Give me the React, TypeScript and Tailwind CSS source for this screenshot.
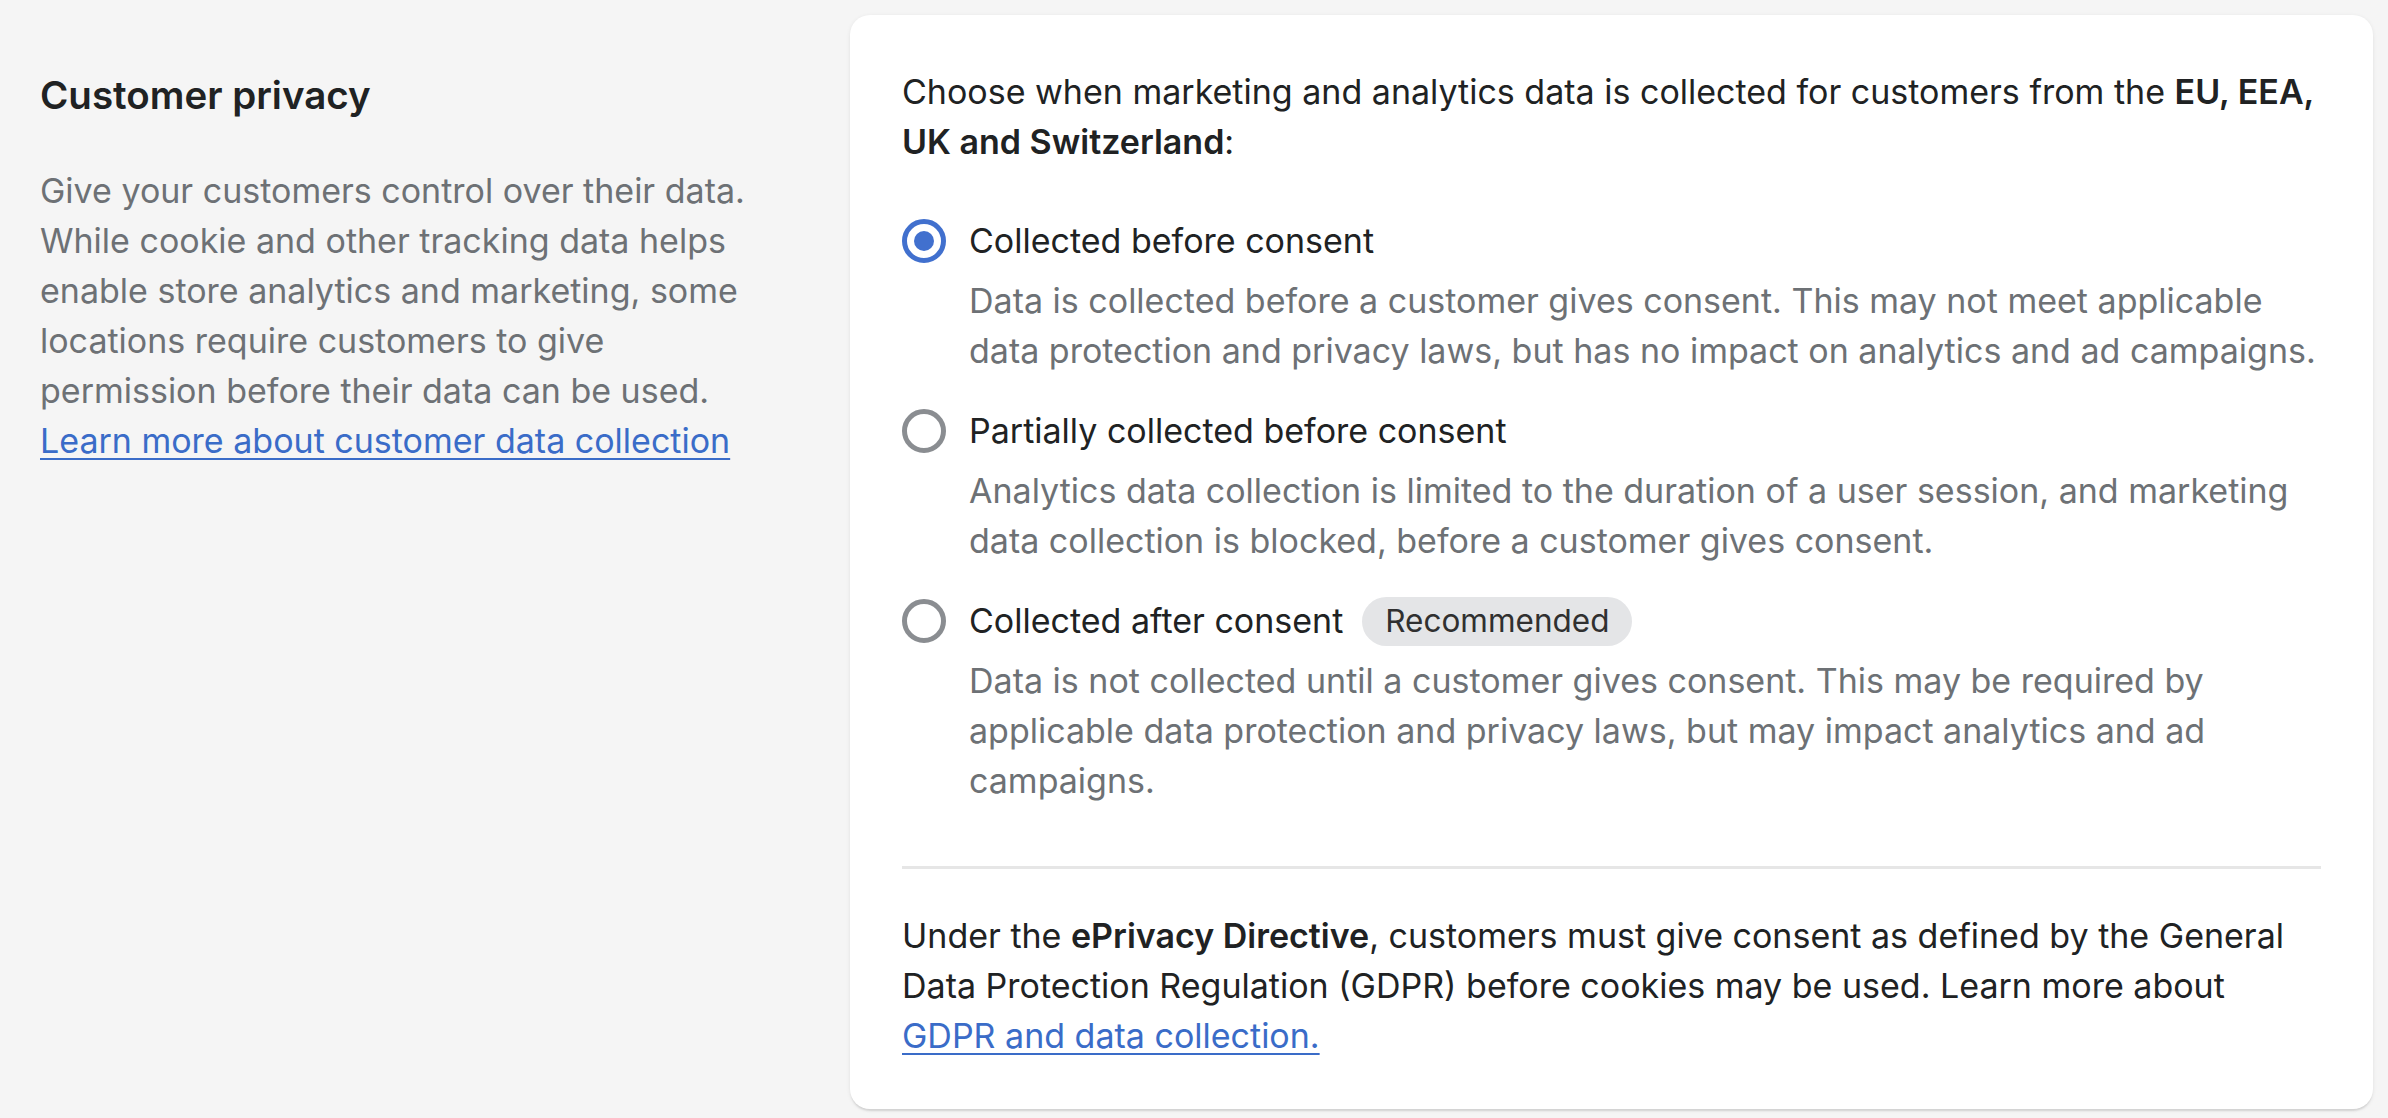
import React from "react";

function Radio({ checked }: { checked: boolean }) {
  return checked ? (
    <span className="flex h-[44px] w-[44px] shrink-0 items-center justify-center rounded-full border-[5px] border-[#4170ce] bg-white">
      <span className="h-[20px] w-[20px] rounded-full bg-[#4170ce]" />
    </span>
  ) : (
    <span className="h-[44px] w-[44px] shrink-0 rounded-full border-[5px] border-[#8a8d91] bg-white" />
  );
}

function Choice({
  checked,
  title,
  badge,
  lines,
}: {
  checked: boolean;
  title: string;
  badge?: string;
  lines: string[];
}) {
  return (
    <div className="flex gap-[23px]">
      <div className="flex h-[50px] items-center">
        <Radio checked={checked} />
      </div>
      <div className="flex-1">
        <div className="flex h-[50px] items-center gap-[19px] text-[#202223]">
          <span>{title}</span>
          {badge && (
            <span className="flex h-[49px] items-center rounded-full bg-[#e4e5e7] px-[23px] text-[31.5px] text-[#303030]">
              {badge}
            </span>
          )}
        </div>
        <p className="mt-[10px] whitespace-nowrap text-[#6d7175]">
          {lines.map((l, i) => (
            <React.Fragment key={i}>
              {i > 0 && <br />}
              {l}
            </React.Fragment>
          ))}
        </p>
      </div>
    </div>
  );
}

export default function App() {
  return (
    <div
      className="flex h-[1118px] w-[2388px] bg-[#f5f5f5] text-[34px] leading-[50px]"
      style={{ fontFamily: "Inter, 'Noto Sans', sans-serif" }}
    >
      <div className="w-[850px] shrink-0 pl-[40px] pt-[70px]">
        <h2 className="text-[38.5px] font-semibold leading-[50px] text-[#202223]">Customer privacy</h2>
        <p className="mt-[46px] whitespace-nowrap text-[#6d7175]">
          Give your customers control over their data.
          <br />
          While cookie and other tracking data helps
          <br />
          enable store analytics and marketing, some
          <br />
          locations require customers to give
          <br />
          permission before their data can be used.
          <br />
          <a href="#" className="text-[#3a6cc8] underline decoration-[2px] underline-offset-[5px]">
            Learn more about customer data collection
          </a>
        </p>
      </div>
      <div className="mt-[15px] w-[1523px] self-start rounded-[20px] bg-white px-[52px] pb-[48px] pt-[52px] shadow-[0_1px_4px_rgba(0,0,0,0.08),0_3px_2px_-1px_rgba(0,0,0,0.1)]">
        <p className="whitespace-nowrap text-[#202223]">
          Choose when marketing and analytics data is collected for customers from the{" "}
          <span className="font-semibold">EU, EEA,</span>
          <br />
          <span className="font-semibold">UK and Switzerland</span>:
        </p>
        <div className="mt-[49px] flex flex-col gap-[30px]">
          <Choice
            checked
            title="Collected before consent"
            lines={[
              "Data is collected before a customer gives consent. This may not meet applicable",
              "data protection and privacy laws, but has no impact on analytics and ad campaigns.",
            ]}
          />
          <Choice
            checked={false}
            title="Partially collected before consent"
            lines={[
              "Analytics data collection is limited to the duration of a user session, and marketing",
              "data collection is blocked, before a customer gives consent.",
            ]}
          />
          <Choice
            checked={false}
            title="Collected after consent"
            badge="Recommended"
            lines={[
              "Data is not collected until a customer gives consent. This may be required by",
              "applicable data protection and privacy laws, but may impact analytics and ad",
              "campaigns.",
            ]}
          />
        </div>
        <div className="mt-[60px] h-[3px] bg-[#e6e6e6]" />
        <p className="mt-[42px] whitespace-nowrap text-[#202223]">
          Under the <span className="font-semibold">ePrivacy Directive</span>, customers must give
          consent as defined by the General
          <br />
          Data Protection Regulation (GDPR) before cookies may be used. Learn more about
          <br />
          <a href="#" className="text-[#3a6cc8] underline decoration-[2px] underline-offset-[5px]">
            GDPR and data collection.
          </a>
        </p>
      </div>
    </div>
  );
}
